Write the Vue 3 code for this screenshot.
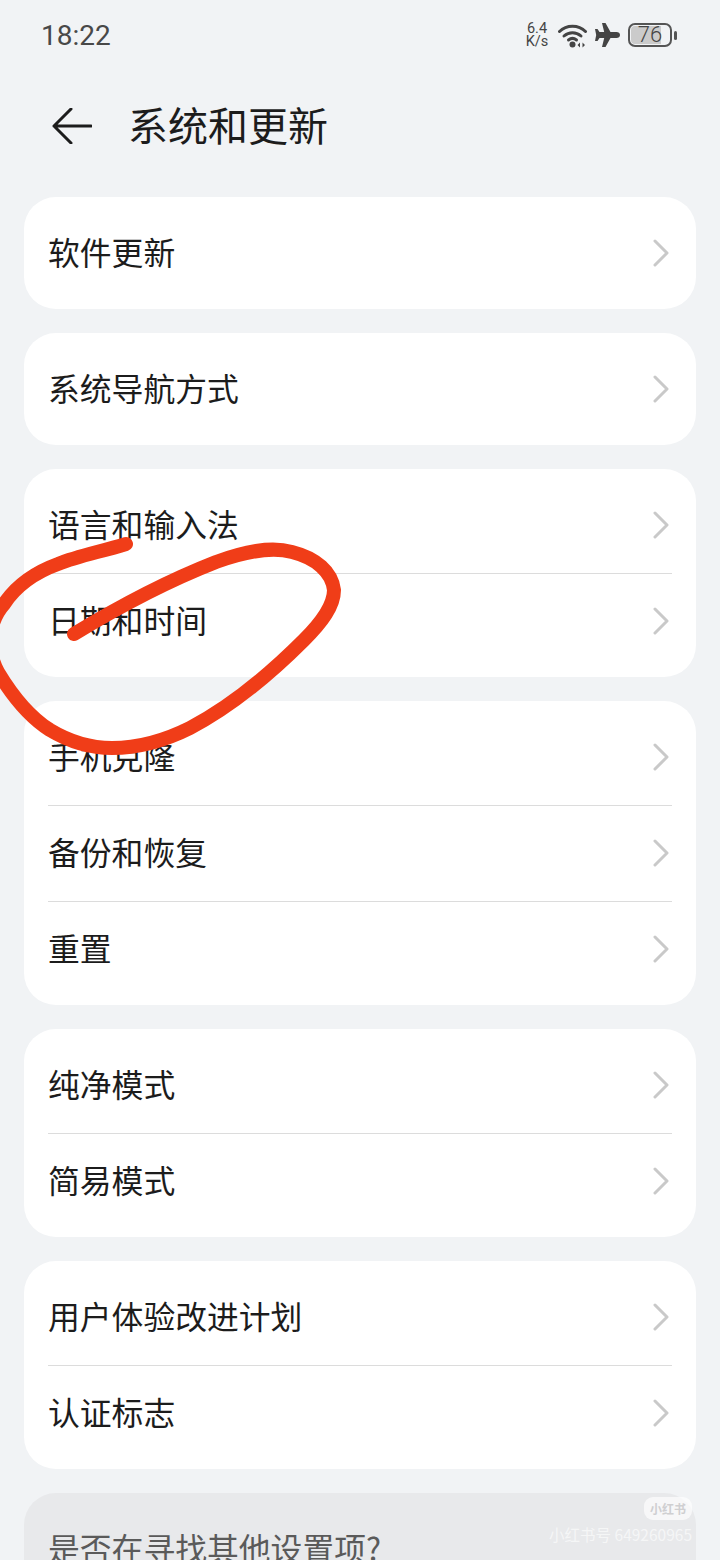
<script setup>
const groups = [
  ['软件更新'],
  ['系统导航方式'],
  ['语言和输入法', '日期和时间'],
  ['手机克隆', '备份和恢复', '重置'],
  ['纯净模式', '简易模式'],
  ['用户体验改进计划', '认证标志'],
]
</script>

<template>
  <div class="page">
    <div class="status">
      <span class="time">18:22</span>
      <div class="status-right">
        <div class="speed"><span>6.4</span><span>K/s</span></div>
        <svg class="wifi" width="30" height="26" viewBox="0 0 30 26">
          <path d="M1.5 9.5C8.5 2.5 20.500 2.500 27.500 9.500" fill="none" stroke="#444" stroke-width="3" stroke-linecap="round" />
          <path d="M6 14C11 9.500 18 9.500 23 14" fill="none" stroke="#444" stroke-width="3" stroke-linecap="round" />
          <path d="M10.500 18C13 16 16 16 18.500 18" fill="none" stroke="#444" stroke-width="3" stroke-linecap="round" />
          <circle cx="14.500" cy="22.500" r="3" fill="#444" />
          <path d="M22 20.500v5l-2.500-2.500zM24.500 20.500v5l2.500-2.500z" fill="#444" />
        </svg>
        <svg class="plane" width="25" height="24" viewBox="0 0 25 24">
          <path d="M7 0h3.500l5 9h6c2 0 3.500 1.300 3.500 3s-1.500 3-3.500 3h-6l-5 9H7l2.200-9H4.500L2.500 18H0l1.200-6L0 6h2.500l2 3h4.700z" fill="#444" />
        </svg>
        <div class="battery">
          <div class="battery-body">
            <div class="battery-fill"></div>
            <span class="battery-num">76</span>
          </div>
          <div class="battery-nub"></div>
        </div>
      </div>
    </div>

    <div class="header">
      <svg class="back" width="40" height="36" viewBox="0 0 40 36">
        <path d="M39 18H2M19 1 2 18l17 17" fill="none" stroke="#1c1c1c" stroke-width="3" stroke-linecap="round" stroke-linejoin="round" />
      </svg>
      <h1 class="title">系统和更新</h1>
    </div>

    <div class="list">
      <div v-for="(group, i) in groups" :key="i" class="card">
        <div v-for="item in group" :key="item" class="row">
          <span class="label">{{ item }}</span>
          <svg class="chevron" width="16" height="28" viewBox="0 0 16 28">
            <path d="M2 2l12 12L2 26" fill="none" stroke="#c9c9c9" stroke-width="3" stroke-linecap="round" stroke-linejoin="round" />
          </svg>
        </div>
      </div>
      <div class="card card-grey">
        <div class="row"><span class="label label-grey">是否在寻找其他设置项?</span></div>
      </div>
    </div>

    <!-- red marker scribble drawn on top of the screenshot -->
    <svg class="scribble" width="720" height="1560" viewBox="0 0 720 1560">
      <path
        d="M126 544C100 552 78 556 58 564C36 572 16 586 4 604C-12 622 -14 650 -2 672C10 692 28 716 50 730C70 742 90 748 112 748C140 748 166 740 190 728C232 706 272 672 304 640C322 622 334 606 334 590C332 572 316 558 292 552C270 546 244 552 216 562C170 580 120 606 74 634"
        fill="none"
        stroke="#f03d18"
        stroke-width="14"
        stroke-linecap="round"
        stroke-linejoin="round"
      />
    </svg>

    <div class="watermark">
      <div class="wm-logo">小红书</div>
      <div class="wm-id">小红书号 649260965</div>
    </div>
  </div>
</template>

<style>
html, body {
  margin: 0;
  background: #f1f3f5;
}
</style>

<style scoped>
.page {
  position: relative;
  width: 720px;
  height: 1560px;
  overflow: hidden;
  background: #f1f3f5;
  font-family: "Noto Sans CJK SC", "Noto Sans", sans-serif;
  color: #1c1c1c;
}
.status {
  height: 70px;
  box-sizing: border-box;
  padding: 0 43px 0 41px;
  display: flex;
  align-items: center;
  justify-content: space-between;
}
.time {
  font-family: Roboto, sans-serif;
  font-size: 28px;
  color: #484848;
}
.status-right {
  display: flex;
  align-items: center;
  color: #444;
}
.speed {
  display: flex;
  flex-direction: column;
  align-items: center;
  width: 22px;
  font-family: Roboto, sans-serif;
  font-size: 14.500px;
  line-height: 13px;
  margin-right: 10px;
}
.wifi {
  margin-right: 7px;
}
.plane {
  margin-right: 8px;
}
.battery {
  display: flex;
  align-items: center;
}
.battery-body {
  position: relative;
  width: 44px;
  height: 24px;
  box-sizing: border-box;
  border: 2px solid #555;
  border-radius: 7px;
  display: flex;
  align-items: center;
  justify-content: center;
}
.battery-fill {
  position: absolute;
  left: 1px;
  top: 1px;
  bottom: 1px;
  width: 30px;
  border-radius: 4px 0 0 4px;
  background: #cbcbcb;
}
.battery-num {
  position: relative;
  font-family: Roboto, sans-serif;
  font-weight: 300;
  font-size: 22px;
  line-height: 20px;
  color: #444;
}
.battery-nub {
  width: 3px;
  height: 9px;
  margin-left: 2px;
  border-radius: 2px;
  background: #555;
}
.header {
  height: 127px;
  box-sizing: border-box;
  padding: 0 0 19px 52px;
  display: flex;
  align-items: center;
}
.back {
  flex: none;
  margin-top: 3px;
}
.title {
  margin: 0 0 0 36px;
  font-size: 40px;
  font-weight: 400;
  line-height: 1;
  color: #1c1c1c;
}
.list {
  padding: 0 24px;
  display: flex;
  flex-direction: column;
  gap: 24px;
}
.card {
  background: #fff;
  border-radius: 32px;
  padding: 8px 24px;
}
.card-grey {
  background: #e8e9eb;
}
.row {
  height: 96px;
  display: flex;
  align-items: center;
  justify-content: space-between;
  box-sizing: border-box;
}
.row + .row {
  border-top: 1px solid #dcdcdc;
  padding-bottom: 2px;
}
.label {
  font-size: 31.800px;
  line-height: 1;
  margin-top: -2px;
  color: #1c1c1c;
}
.label-grey {
  color: #5a5a5a;
}
.chevron {
  margin-right: 3px;
}
.scribble {
  position: absolute;
  left: 0;
  top: 0;
  pointer-events: none;
}
.watermark {
  position: absolute;
  right: 28px;
  top: 1497px;
  display: flex;
  flex-direction: column;
  align-items: flex-end;
  color: rgba(255, 255, 255, 0.6);
}
.wm-logo {
  width: 48px;
  height: 23px;
  border-radius: 9px;
  background: rgba(255, 255, 255, 0.65);
  color: #cfcfd1;
  font-size: 12px;
  font-weight: 700;
  line-height: 23px;
  text-align: center;
}
.wm-id {
  margin-top: 3px;
  font-size: 15.500px;
  line-height: 22px;
  white-space: nowrap;
}
</style>
